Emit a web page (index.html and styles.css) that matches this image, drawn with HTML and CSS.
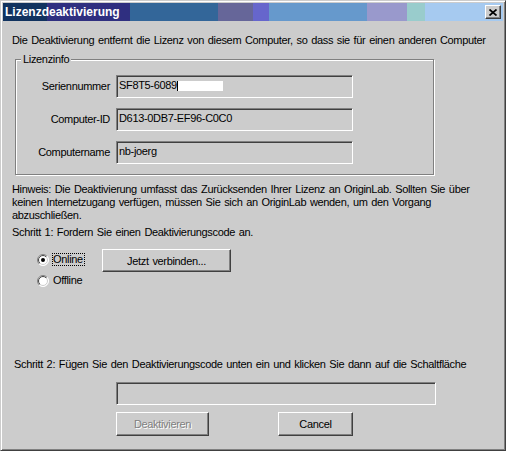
FILE: index.html
```html
<!DOCTYPE html>
<html lang="de">
<head>
<meta charset="utf-8">
<title>Lizenzdeaktivierung</title>
<link rel="stylesheet" href="styles.css">
</head>
<body>
<div class="window">
  <div class="titlebar">
    <span class="title">Lizenzdeaktivierung</span>
    <button class="close" aria-label="Schließen">
      <svg width="8" height="7" viewBox="0 0 8 7"><path d="M0.5 0.5 L7.5 6.5 M7.5 0.5 L0.5 6.5" stroke="#000" stroke-width="1.7" fill="none"/></svg>
    </button>
  </div>
  <div class="body">
    <p class="intro">Die Deaktivierung entfernt die Lizenz von diesem Computer, so dass sie für einen anderen Computer</p>
    <fieldset class="group">
      <legend>Lizenzinfo</legend>
      <div class="row">
        <span class="label">Seriennummer</span>
        <div class="field"><span>SF8T5-6089</span><span class="redact"></span></div>
      </div>
      <div class="row">
        <span class="label">Computer-ID</span>
        <div class="field"><span>D613-0DB7-EF96-C0C0</span></div>
      </div>
      <div class="row">
        <span class="label">Computername</span>
        <div class="field"><span>nb-joerg</span></div>
      </div>
    </fieldset>
    <p class="note">Hinweis: Die Deaktivierung umfasst das Zurücksenden Ihrer Lizenz an OriginLab. Sollten Sie über<br>keinen Internetzugang verfügen, müssen Sie sich an OriginLab wenden, um den Vorgang<br>abzuschließen.</p>
    <p class="step">Schritt 1: Fordern Sie einen Deaktivierungscode an.</p>
    <div class="options">
      <div class="radios">
        <div class="radio">
          <svg class="dot" width="12" height="12" viewBox="0 0 12 12">
            <defs>
              <linearGradient id="go" x1="0" y1="0" x2="1" y2="1"><stop offset="0.5" stop-color="#808080"/><stop offset="0.5" stop-color="#ffffff"/></linearGradient>
              <linearGradient id="gi" x1="0" y1="0" x2="1" y2="1"><stop offset="0.5" stop-color="#404040"/><stop offset="0.5" stop-color="#cccccc"/></linearGradient>
            </defs>
            <circle cx="6" cy="6" r="5.5" fill="#fff" stroke="url(#go)"/>
            <circle cx="6" cy="6" r="4.5" fill="#fff" stroke="url(#gi)"/>
            <circle cx="6" cy="6" r="2" fill="#000"/>
          </svg>
          <span class="focus">Online</span>
        </div>
        <div class="radio">
          <svg class="dot" width="12" height="12" viewBox="0 0 12 12">
            <circle cx="6" cy="6" r="5.5" fill="#fff" stroke="url(#go)"/>
            <circle cx="6" cy="6" r="4.5" fill="#fff" stroke="url(#gi)"/>
          </svg>
          <span class="plain">Offline</span>
        </div>
      </div>
      <button class="btn connect">Jetzt verbinden...</button>
    </div>
    <p class="step2">Schritt 2: Fügen Sie den Deaktivierungscode unten ein und klicken Sie dann auf die Schaltfläche</p>
    <div class="field codefield"></div>
    <div class="buttons">
      <button class="btn disabled">Deaktivieren</button>
      <button class="btn cancel">Cancel</button>
    </div>
  </div>
</div>
</body>
</html>
```
FILE: styles.css
```css
html, body {
  margin: 0;
  padding: 0;
  background: #cccccc;
}

.window {
  box-sizing: border-box;
  width: 506px;
  height: 451px;
  background: #cccccc;
  border: 1px solid;
  border-color: #cccccc #404040 #404040 #cccccc;
  box-shadow: inset 1px 1px 0 #ffffff, inset -1px -1px 0 #808080;
  padding: 2px;
  font-family: "Liberation Sans", Arial, sans-serif;
  font-size: 11px;
  letter-spacing: -0.33px;
  word-spacing: 1px;
  color: #000;
  overflow: hidden;
}

.titlebar {
  height: 18px;
  display: flex;
  align-items: center;
  justify-content: space-between;
  padding: 0 2px 0 2px;
  background: linear-gradient(to right,
    #11335f 0 44px,
    #2f2f80 44px 127px,
    #336699 127px 215px,
    #666699 215px 250px,
    #6666cc 250px 266px,
    #6699cc 266px 364px,
    #9999cc 364px 404px,
    #99cccc 404px 422px,
    #a6caf0 422px);
}

.title {
  color: #fff;
  font-weight: bold;
  font-size: 12px;
  letter-spacing: 0;
  word-spacing: 0;
  line-height: 14px;
}

.close {
  box-sizing: border-box;
  width: 16px;
  height: 14px;
  padding: 0;
  margin: 0;
  display: flex;
  align-items: center;
  justify-content: center;
  background: #cccccc;
  border: 1px solid;
  border-color: #ffffff #404040 #404040 #ffffff;
  box-shadow: inset -1px -1px 0 #808080;
}

.body {
  padding-left: 9px;
}

p {
  margin: 0;
  line-height: 13px;
  white-space: nowrap;
}

.intro {
  margin-top: 13px;
}

.group {
  box-sizing: border-box;
  margin: 6px 0 0 3px;
  width: 419px;
  padding: 9px 0 10px 0;
  border: 1px solid #808080;
  box-shadow: 1px 1px 0 #ffffff, inset 1px 1px 0 #ffffff;
  min-width: 0;
}

.group legend {
  margin-left: 5px;
  padding: 0 2px;
  line-height: 13px;
  background: #cccccc;
}

.row {
  display: flex;
  align-items: center;
  gap: 6px;
  margin-bottom: 10px;
}

.row:last-child {
  margin-bottom: 0;
}

.label {
  width: 94px;
  text-align: right;
  line-height: 13px;
}

.field {
  box-sizing: border-box;
  width: 237px;
  height: 23px;
  border: 1px solid;
  border-color: #808080 #ffffff #ffffff #808080;
  box-shadow: inset 1px 1px 0 #404040;
  background: #cccccc;
  display: flex;
  align-items: flex-start;
  padding: 3px 0 0 2px;
  line-height: 13px;
}

.redact {
  display: block;
  width: 45px;
  height: 10px;
  margin-top: 2px;
  background: #ffffff;
  border-left: 1px solid #000;
}

.note {
  margin-top: 8px;
}

.step {
  margin-top: 4px;
}

.options {
  display: flex;
  align-items: flex-start;
  margin: 10px 0 0 25px;
}

.radios {
  width: 65px;
  margin-top: 4px;
  display: flex;
  flex-direction: column;
  gap: 8px;
}

.radio {
  display: flex;
  align-items: center;
  height: 13px;
  gap: 3px;
}

.dot {
  flex: none;
}

.focus {
  border: 1px dotted #000;
  padding: 0 1px 0 0;
  line-height: 11px;
}

.plain {
  padding-left: 1px;
  line-height: 11px;
}

.btn {
  box-sizing: border-box;
  height: 23px;
  padding: 0;
  margin: 0;
  font-family: inherit;
  font-size: 11px;
  letter-spacing: -0.33px;
  word-spacing: 1px;
  color: #000;
  background: #cccccc;
  border: 1px solid;
  border-color: #ffffff #404040 #404040 #ffffff;
  box-shadow: inset -1px -1px 0 #808080;
}

.connect {
  width: 129px;
}

.step2 {
  margin-top: 71px;
  padding-left: 2px;
}

.codefield {
  width: 320px;
  margin: 11px 0 0 104px;
}

.buttons {
  display: flex;
  gap: 69px;
  margin: 7px 0 0 104px;
}

.disabled {
  width: 93px;
  height: 24px;
  color: #808080;
  text-shadow: 1px 1px 0 #ffffff;
}

.cancel {
  width: 75px;
  height: 24px;
}
```
